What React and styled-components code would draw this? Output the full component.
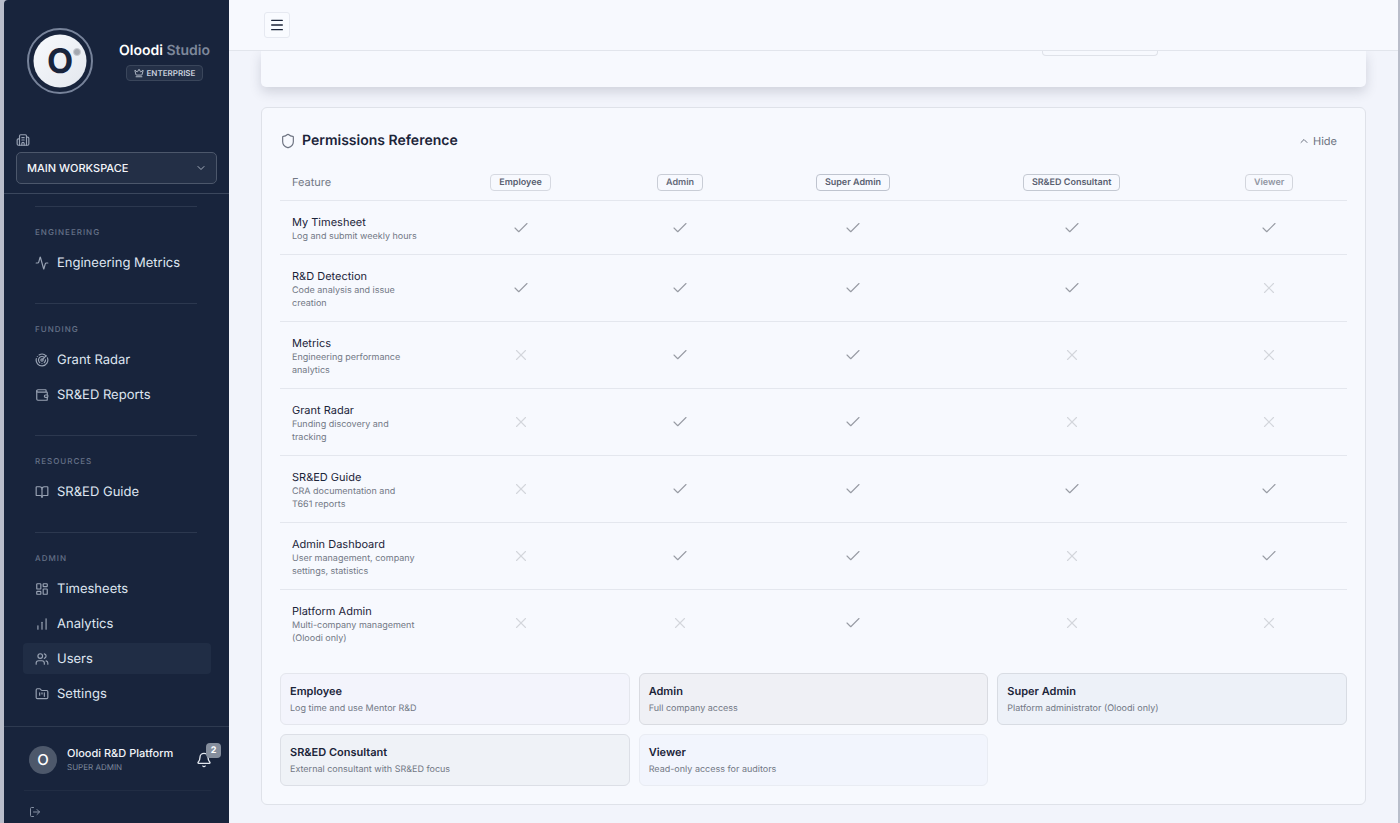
import React, { useState } from 'react';
import styled, { createGlobalStyle } from 'styled-components';
import {
  Activity,
  Bell,
  BookOpen,
  Building2,
  ChartNoAxesColumnIncreasing,
  Check,
  ChevronDown,
  ChevronUp,
  Crown,
  FolderKanban,
  LayoutDashboard,
  LogOut,
  Menu,
  Radar,
  Shield,
  Users,
  Wallet,
  X,
} from 'lucide-react';

const navSections = [
  {
    title: 'Engineering',
    items: [{ label: 'Engineering Metrics', icon: Activity }],
  },
  {
    title: 'Funding',
    items: [
      { label: 'Grant Radar', icon: Radar },
      { label: 'SR&ED Reports', icon: Wallet },
    ],
  },
  {
    title: 'Resources',
    items: [{ label: 'SR&ED Guide', icon: BookOpen }],
  },
  {
    title: 'Admin',
    items: [
      { label: 'Timesheets', icon: LayoutDashboard },
      { label: 'Analytics', icon: ChartNoAxesColumnIncreasing },
      { label: 'Users', icon: Users },
      { label: 'Settings', icon: FolderKanban },
    ],
  },
];

const roles = [
  {
    name: 'Employee',
    about: 'Log time and use Mentor R&D',
    width: '16.1%',
    text: '#596070',
    line: '#d6d9e1',
    bg: '#f3f4fc',
    edge: '#e4e6ed',
  },
  {
    name: 'Admin',
    about: 'Full company access',
    width: '13.8%',
    text: '#646a78',
    line: '#c9cdd6',
    bg: '#eff0f5',
    edge: '#d9dbe1',
  },
  {
    name: 'Super Admin',
    about: 'Platform administrator (Oloodi only)',
    width: '18.6%',
    text: '#596070',
    line: '#bfc4cf',
    bg: '#edf1f8',
    edge: '#d8dce3',
  },
  {
    name: 'SR&ED Consultant',
    about: 'External consultant with SR&ED focus',
    width: '22.4%',
    text: '#596070',
    line: '#c4c9d2',
    bg: '#eff2f7',
    edge: '#dcdfe6',
  },
  {
    name: 'Viewer',
    about: 'Read-only access for auditors',
    width: '14.6%',
    text: '#9196a2',
    line: '#d3d6dd',
    bg: '#f2f5fd',
    edge: '#e9ecf3',
  },
];

// access follows the order of roles
const features = [
  { name: 'My Timesheet', about: 'Log and submit weekly hours', access: [1, 1, 1, 1, 1] },
  { name: 'R&D Detection', about: 'Code analysis and issue creation', access: [1, 1, 1, 1, 0] },
  { name: 'Metrics', about: 'Engineering performance analytics', access: [0, 1, 1, 0, 0] },
  { name: 'Grant Radar', about: 'Funding discovery and tracking', access: [0, 1, 1, 0, 0] },
  { name: 'SR&ED Guide', about: 'CRA documentation and T661 reports', access: [0, 1, 1, 1, 1] },
  { name: 'Admin Dashboard', about: 'User management, company settings, statistics', access: [0, 1, 1, 0, 1] },
  { name: 'Platform Admin', about: 'Multi-company management (Oloodi only)', access: [0, 0, 1, 0, 0] },
];

const Logo = () => (
  <svg width="66" height="66" viewBox="0 0 66 66" aria-hidden="true">
    <defs>
      <linearGradient id="disc" x1="0" y1="0" x2="1" y2="1">
        <stop offset="0" stopColor="#f8fafd" />
        <stop offset="1" stopColor="#e3e7ee" />
      </linearGradient>
    </defs>
    <circle cx="33" cy="33" r="32" fill="none" stroke="#77839a" strokeWidth="2" />
    <circle cx="33" cy="33" r="26.5" fill="url(#disc)" />
    <text
      x="33"
      y="45"
      textAnchor="middle"
      fontFamily="Inter, sans-serif"
      fontSize="34"
      fontWeight="700"
      fill="#18243c"
    >
      O
    </text>
    <circle cx="50" cy="24" r="3.5" fill="#a4a8b0" stroke="#c9ccd2" />
  </svg>
);

const Sidebar = () => {
  const [active, setActive] = useState('Users');

  return (
    <SidebarWrapper>
      <SidebarHead>
        <Brand>
          <Logo />
          <BrandText>
            <BrandName>
              Oloodi <span>Studio</span>
            </BrandName>
            <Plan>
              <Crown size={10} />
              ENTERPRISE
            </Plan>
          </BrandText>
        </Brand>
        <WorkspaceLabel htmlFor="workspace" aria-label="Workspace">
          <Building2 size={14} />
        </WorkspaceLabel>
        <SelectBox>
          <Select id="workspace" defaultValue="main">
            <option value="main">MAIN WORKSPACE</option>
          </Select>
          <ChevronDown size={12} />
        </SelectBox>
      </SidebarHead>

      <Nav>
        {navSections.map(section => (
          <Section key={section.title}>
            <SectionTitle>{section.title}</SectionTitle>
            <NavList>
              {section.items.map(({ label, icon: Icon }) => (
                <li key={label}>
                  <NavLink
                    href="#"
                    $active={label === active}
                    onClick={() => setActive(label)}
                  >
                    <Icon size={14} />
                    {label}
                  </NavLink>
                </li>
              ))}
            </NavList>
          </Section>
        ))}
      </Nav>

      <SidebarFoot>
        <Account>
          <Avatar>O</Avatar>
          <AccountText>
            <AccountName>Oloodi R&amp;D Platform</AccountName>
            <AccountRole>SUPER ADMIN</AccountRole>
          </AccountText>
          <BellButton aria-label="Notifications">
            <Bell size={16} />
            <Count>2</Count>
          </BellButton>
        </Account>
        <LogoutButton aria-label="Log out">
          <LogOut size={12} />
        </LogoutButton>
      </SidebarFoot>
    </SidebarWrapper>
  );
};

const PermissionsTable = () => (
  <Table>
    <colgroup>
      <Col $width="14.5%" />
      {roles.map(role => (
        <Col key={role.name} $width={role.width} />
      ))}
    </colgroup>
    <thead>
      <tr>
        <FeatureHead scope="col">Feature</FeatureHead>
        {roles.map(role => (
          <RoleHead key={role.name} scope="col">
            <RoleBadge $text={role.text} $line={role.line}>
              {role.name}
            </RoleBadge>
          </RoleHead>
        ))}
      </tr>
    </thead>
    <tbody>
      {features.map(feature => (
        <Row key={feature.name}>
          <FeatureCell scope="row">
            <FeatureName>{feature.name}</FeatureName>
            <FeatureAbout>{feature.about}</FeatureAbout>
          </FeatureCell>
          {feature.access.map((allowed, index) => (
            <AccessCell key={roles[index].name} $allowed={allowed}>
              {allowed ? (
                <Check size={18} strokeWidth={1.5} aria-label="Yes" />
              ) : (
                <X size={18} strokeWidth={1.5} aria-label="No" />
              )}
            </AccessCell>
          ))}
        </Row>
      ))}
    </tbody>
  </Table>
);

const App = () => {
  const [open, setOpen] = useState(true);

  return (
    <Shell>
      <GlobalStyle />
      <Sidebar />
      <Main>
        <TopBar>
          <MenuButton aria-label="Toggle menu">
            <Menu size={16} />
          </MenuButton>
        </TopBar>
        <Content>
          <PreviousCard>
            <PreviousControl />
          </PreviousCard>
          <Card>
            <CardHead>
              <Shield size={16} strokeWidth={1.75} />
              <CardTitle>Permissions Reference</CardTitle>
              <HideButton onClick={() => setOpen(!open)}>
                <ChevronUp size={12} />
                {open ? 'Hide' : 'Show'}
              </HideButton>
            </CardHead>
            {open && (
              <>
                <PermissionsTable />
                <RoleGrid>
                  {roles.map(role => (
                    <RoleCard key={role.name} $bg={role.bg} $edge={role.edge}>
                      <RoleName>{role.name}</RoleName>
                      <RoleAbout>{role.about}</RoleAbout>
                    </RoleCard>
                  ))}
                </RoleGrid>
              </>
            )}
          </Card>
        </Content>
      </Main>
    </Shell>
  );
};

const GlobalStyle = createGlobalStyle`
  * {
    box-sizing: border-box;
  }
  body {
    margin: 0;
    font-family: Inter, 'Liberation Sans', sans-serif;
    text-rendering: geometricPrecision;
    color: #1b2439;
    background: #b9bdca;
  }
  button, select {
    font-family: inherit;
    text-rendering: inherit;
    cursor: pointer;
  }
  h2, h3, p, ul {
    margin: 0;
    padding: 0;
  }
  svg {
    display: block;
    flex-shrink: 0;
  }
`;

const Shell = styled.div`
  display: flex;
  height: 100vh;
  padding: 0 2px 0 4px;
  overflow: hidden;
`;

const SidebarWrapper = styled.aside`
  display: flex;
  flex-direction: column;
  flex: 0 0 225px;
  background: #18243c;
  color: #dbe2ee;
  border-top-left-radius: 4px;
`;

const SidebarHead = styled.div`
  padding: 28px 12px 9px;
  border-bottom: 1px solid #3b475d;
`;

const Brand = styled.div`
  display: flex;
  align-items: center;
  gap: 26px;
  padding-left: 11px;
`;

const BrandText = styled.div`
  display: flex;
  flex-direction: column;
  align-items: center;
  gap: 4px;
`;

const BrandName = styled.div`
  font-size: 14px;
  line-height: 20px;
  font-weight: 600;
  color: #ffffff;
  white-space: nowrap;
  span {
    color: #7d889b;
  }
`;

const Plan = styled.div`
  display: flex;
  align-items: center;
  gap: 3px;
  height: 16px;
  padding: 0 7px;
  border: 1px solid #3a465b;
  border-radius: 4px;
  background: #243047;
  color: #cbd2df;
  font-size: 8px;
  font-weight: 600;
`;

const WorkspaceLabel = styled.label`
  display: block;
  width: 14px;
  margin: 39px 0 5px;
  color: #97a1b3;
`;

const SelectBox = styled.div`
  display: grid;
  align-items: center;
  color: #a5aebd;
  > * {
    grid-area: 1 / 1;
  }
  svg {
    justify-self: end;
    margin-right: 10px;
    pointer-events: none;
  }
`;

const Select = styled.select`
  appearance: none;
  width: 100%;
  height: 32px;
  padding: 0 10px;
  border: 1px solid #4c576b;
  border-radius: 5px;
  background: #232f46;
  color: #f4f6fa;
  font-size: 11px;
  font-weight: 500;
`;

const Nav = styled.nav`
  flex: 1;
  min-height: 0;
  overflow: hidden;
  padding: 12px 18px 0 19px;
`;

const Section = styled.section`
  padding-bottom: 25px;
  &::before {
    content: '';
    display: block;
    height: 1px;
    margin: 0 14px 0 12px;
    background: #2c384f;
  }
`;

const SectionTitle = styled.h3`
  padding: 20px 12px 9px;
  font-size: 8px;
  line-height: 11px;
  font-weight: 500;
  letter-spacing: 1px;
  text-transform: uppercase;
  color: #667288;
`;

const NavList = styled.ul`
  display: flex;
  flex-direction: column;
  gap: 4px;
  list-style: none;
`;

const NavLink = styled.a`
  display: flex;
  align-items: center;
  gap: 8px;
  height: 31px;
  padding: 0 12px;
  border-radius: 4px;
  background: ${props => (props.$active ? '#202d45' : 'transparent')};
  color: #dfe6f1;
  font-size: 13px;
  text-decoration: none;
  svg {
    color: #99a3b4;
  }
`;

const SidebarFoot = styled.div`
  flex: 0 0 97px;
  padding: 0 18px 0 20px;
  border-top: 1px solid #2e3a50;
  overflow: hidden;
`;

const Account = styled.div`
  display: flex;
  align-items: center;
  height: 64px;
  padding: 2px 0 0 5px;
  border-bottom: 1px solid #212d44;
`;

const Avatar = styled.div`
  display: grid;
  place-items: center;
  width: 28px;
  height: 28px;
  margin-right: 10px;
  border-radius: 50%;
  background: #4d586b;
  color: #ffffff;
  font-size: 15px;
  font-weight: 500;
`;

const AccountText = styled.div`
  flex: 1;
  white-space: nowrap;
`;

const AccountName = styled.div`
  font-size: 11px;
  line-height: 15px;
  font-weight: 500;
  color: #f1f4f9;
`;

const AccountRole = styled.div`
  font-size: 8px;
  line-height: 12px;
  color: #7c879b;
`;

const BellButton = styled.button`
  position: relative;
  padding: 0;
  margin-right: -1px;
  border: none;
  background: none;
  color: #e3e8f0;
`;

const Count = styled.span`
  position: absolute;
  top: -9px;
  left: 10px;
  width: 15px;
  height: 15px;
  border-radius: 4px;
  background: #858e9d;
  color: #ffffff;
  font-size: 9px;
  line-height: 15px;
  font-weight: 700;
  text-align: center;
`;

const LogoutButton = styled.button`
  display: block;
  margin: 15px 0 0 5px;
  padding: 0;
  border: none;
  background: none;
  color: #8590a3;
`;

const Main = styled.main`
  flex: 1;
  min-width: 0;
  background: #f2f4fb;
`;

const TopBar = styled.header`
  position: relative;
  display: flex;
  align-items: center;
  height: 51px;
  padding: 0 35px;
  border-bottom: 1px solid #e2e5ec;
  background: #f7f9fe;
`;

const MenuButton = styled.button`
  display: grid;
  place-items: center;
  width: 26px;
  height: 26px;
  padding: 0;
  border: 1px solid #e6e9f1;
  border-radius: 3px;
  background: #f9fbff;
  color: #1b2439;
`;

const Content = styled.div`
  display: flex;
  flex-direction: column;
  gap: 20px;
  padding: 0 32px 18px;
`;

const PreviousCard = styled.section`
  display: flex;
  justify-content: flex-end;
  height: 36px;
  padding-right: 208px;
  border-radius: 0 0 5px 5px;
  background: #f7f9fe;
  box-shadow: 0 5px 12px rgba(40, 50, 70, 0.17);
`;

const PreviousControl = styled.div`
  width: 116px;
  height: 5px;
  border: 1px solid #dfe2e9;
  border-top: none;
  border-radius: 0 0 4px 4px;
`;

const Card = styled.section`
  padding: 18px;
  border: 1px solid #dfe2e9;
  border-radius: 6px;
  background: #f7f9fe;
`;

const CardHead = styled.header`
  display: flex;
  align-items: center;
  gap: 6px;
  height: 29px;
  color: #6c7280;
`;

const CardTitle = styled.h2`
  flex: 1;
  font-size: 14px;
  line-height: 20px;
  font-weight: 600;
  color: #1b2439;
`;

const HideButton = styled.button`
  display: flex;
  align-items: center;
  gap: 3px;
  padding: 4px 10px;
  border: none;
  background: none;
  color: #6c7280;
  font-size: 11px;
`;

const Table = styled.table`
  width: 100%;
  margin-top: 8px;
  table-layout: fixed;
  border-collapse: separate;
  border-spacing: 0;
`;

const Col = styled.col`
  width: ${props => props.$width};
`;

const HeadCell = styled.th`
  height: 38px;
  padding: 0 12px;
  border-bottom: 1px solid #e4e7ee;
`;

const FeatureHead = styled(HeadCell)`
  text-align: left;
  font-size: 11px;
  font-weight: 400;
  color: #727885;
`;

const RoleHead = styled(HeadCell)`
  padding-top: 2px;
  text-align: center;
  font-size: 9px;
`;

const RoleBadge = styled.span`
  display: inline-block;
  padding: 0 8px;
  border: 1px solid ${props => props.$line};
  border-radius: 4px;
  color: ${props => props.$text};
  line-height: 15px;
  font-weight: 600;
  white-space: nowrap;
`;

const FeatureCell = styled.th`
  padding: 13px 0 11px 12px;
  border-bottom: 1px solid #e4e7ee;
  text-align: left;
  font-weight: 400;
`;

const AccessCell = styled.td`
  padding: 0;
  border-bottom: 1px solid #e4e7ee;
  color: ${props => (props.$allowed ? '#989ca4' : '#d3d6dc')};
  svg {
    margin: 0 auto;
  }
`;

const Row = styled.tr`
  &:last-child > * {
    border-bottom: none;
  }
`;

const FeatureName = styled.div`
  font-size: 11px;
  line-height: 16px;
`;

const FeatureAbout = styled.div`
  max-width: 126px;
  font-size: 9px;
  line-height: 13px;
  color: #727885;
`;

const RoleGrid = styled.div`
  display: grid;
  grid-template-columns: repeat(3, 1fr);
  gap: 9px;
  margin-top: 17px;
`;

const RoleCard = styled.article`
  padding: 9px;
  border: 1px solid ${props => props.$edge};
  border-radius: 6px;
  background: ${props => props.$bg};
`;

const RoleName = styled.h3`
  font-size: 11px;
  line-height: 16px;
  font-weight: 600;
`;

const RoleAbout = styled.p`
  margin-top: 3px;
  font-size: 9px;
  line-height: 13px;
  color: #727885;
`;

export default App;
